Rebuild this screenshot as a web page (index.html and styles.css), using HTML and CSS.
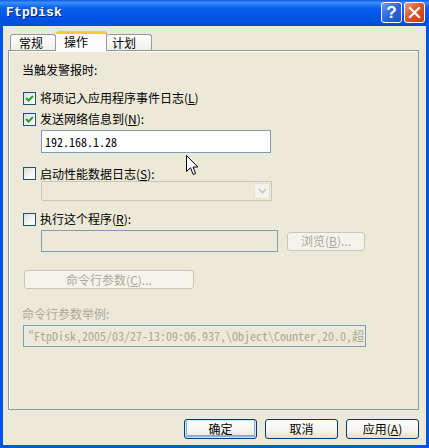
FILE: index.html
```html
<!DOCTYPE html>
<html lang="zh-CN">
<head>
  <meta charset="UTF-8">
  <title>FtpDisk</title>
  <link rel="stylesheet" href="styles.css">
</head>
<body>
  <div class="window">
    <div class="titlebar">
      <span class="title">FtpDisk</span>
      <div class="caption-buttons">
        <span class="cap-btn help">?</span>
        <span class="cap-btn close">
          <svg width="13" height="13" viewBox="0 0 13 13"><path d="M2 2 L11 11 M11 2 L2 11" stroke="#fff" stroke-width="2.2" stroke-linecap="square"/></svg>
        </span>
      </div>
    </div>

    <div class="client">
      <div class="tabs">
        <span class="tab">常规</span>
        <span class="tab selected">操作</span>
        <span class="tab">计划</span>
      </div>

      <div class="panel">
        <div class="label first">当触发警报时:</div>

        <div class="check row-log">
          <span class="box checked"><svg width="11" height="11" viewBox="0 0 11 11"><path d="M2 5 L4.5 7.5 L9 3" fill="none" stroke="#21a121" stroke-width="2"/></svg></span>
          将项记入应用程序事件日志(<u>L</u>)
        </div>
        <div class="check row-net">
          <span class="box checked"><svg width="11" height="11" viewBox="0 0 11 11"><path d="M2 5 L4.5 7.5 L9 3" fill="none" stroke="#21a121" stroke-width="2"/></svg></span>
          发送网络信息到(<u>N</u>):
        </div>
        <div class="field net-field">192.168.1.28</div>

        <div class="check row-perf">
          <span class="box"></span>
          启动性能数据日志(<u>S</u>):
        </div>
        <div class="combo">
          <span class="combo-arrow">
            <svg width="9" height="6" viewBox="0 0 9 6"><path d="M1 1 L4.5 4.5 L8 1" fill="none" stroke="#c9c7ba" stroke-width="1.6"/></svg>
          </span>
        </div>

        <div class="check row-run">
          <span class="box"></span>
          执行这个程序(<u>R</u>):
        </div>
        <div class="run-row">
          <div class="field disabled run-field"></div>
          <span class="btn disabled browse">浏览(<u>B</u>)...</span>
        </div>

        <span class="btn disabled cmd">命令行参数(<u>C</u>)...</span>

        <div class="label muted">命令行参数举例:</div>
        <div class="field disabled example">"FtpDisk,2005/03/27-13:09:06.937,\Object\Counter,20.0,超</div>
      </div>

      <div class="buttons">
        <span class="btn default">确定</span>
        <span class="btn">取消</span>
        <span class="btn">应用(<u>A</u>)</span>
      </div>
    </div>

    <svg class="pointer" width="13" height="21" viewBox="0 0 13 21">
      <path d="M0.5 0.5 L0.5 16.5 L4.5 12.8 L7.2 19.5 L9.6 18.5 L7 12 L11.8 12 Z" fill="#fff" stroke="#000" stroke-width="1"/>
    </svg>
  </div>
</body>
</html>
```

FILE: styles.css
```css
/* Page */
body {
  margin: 0;
  padding: 0;
  font-family: "Noto Sans CJK SC", "Liberation Sans", sans-serif;
  font-size: 12px;
  color: #000;
}

.window {
  position: relative;
  width: 429px;
  height: 448px;
  display: flex;
  flex-direction: column;
  background-color: #0055e5;
}

/* Title bar */
.titlebar {
  height: 26px;
  display: flex;
  align-items: flex-start;
  justify-content: space-between;
  padding: 0 4px 0 6px;
  background: linear-gradient(to bottom, #0a5ddc 0%, #3d8ef9 10%, #0b5ff0 30%, #0054e3 70%, #0050de 100%);
}

.title {
  margin-top: 5px;
  font-family: "Liberation Mono", monospace;
  font-weight: bold;
  font-size: 13px;
  color: #fff;
  text-shadow: 1px 1px 0 #0a1e80;
  letter-spacing: 0.2px;
}

.caption-buttons {
  display: flex;
  gap: 2px;
  margin-top: 2px;
}

.cap-btn {
  width: 21px;
  height: 21px;
  box-sizing: border-box;
  border: 1px solid #fff;
  border-radius: 3px;
  display: flex;
  align-items: center;
  justify-content: center;
}

.help {
  background: linear-gradient(135deg, #6a9cf7 0%, #2c66e0 50%, #1e4fd0 100%);
  color: #fff;
  font-family: "Liberation Sans", sans-serif;
  font-weight: bold;
  font-size: 17px;
}

.close {
  background: linear-gradient(135deg, #f09a7c 0%, #e2542c 45%, #c93a15 100%);
}

/* Client area */
.client {
  flex: 1;
  margin: 0 3px 3px 3px;
  padding: 6px 7px 0 5px;
  background-color: #ece9d8;
  display: flex;
  flex-direction: column;
}

.tabs {
  height: 18px;
  display: flex;
  align-items: flex-end;
  padding-left: 2px;
  position: relative;
  z-index: 1;
}

.tab {
  height: 16px;
  box-sizing: border-box;
  padding: 0 0 0 8px;
  border: 1px solid #919b9c;
  border-bottom: none;
  border-radius: 3px 3px 0 0;
  background: linear-gradient(to bottom, #fefefe, #f1efe6);
  line-height: 15px;
}

.tab:first-child {
  width: 46px;
}

.tab:last-child {
  width: 45px;
  border-left: none;
  padding-left: 5px;
}

.tab.selected {
  width: 51px;
  height: 20px;
  margin-bottom: -1px;
  border-top: 3px solid #ffc83c;
  border-left: none;
  background: #fcfcfe;
  line-height: 15px;
  padding-left: 8px;
}

.panel {
  height: 360px;
  box-sizing: border-box;
  border: 1px solid #919b9c;
  box-shadow: inset 1px 1px 0 #fcfcfe;
  padding: 11px 0 0 13px;
  display: flex;
  flex-direction: column;
  align-items: flex-start;
}

.label {
  height: 16px;
  line-height: 16px;
}

.label.muted {
  margin-top: 17px;
  color: #aca899;
}

.check {
  display: flex;
  align-items: center;
  height: 16px;
  line-height: 16px;
}

.row-log { margin-top: 12px; }
.row-net { margin-top: 5px; }
.row-perf { margin-top: 13px; height: 15px; }
.row-run { margin-top: 10px; }

.box {
  width: 13px;
  height: 13px;
  box-sizing: border-box;
  margin: 0 4px 0 1px;
  border: 1px solid #1c5180;
  background: linear-gradient(135deg, #dcdcd7 0%, #f6f6f4 60%, #fff 100%);
  display: flex;
  align-items: center;
  justify-content: center;
}

u {
  text-decoration: underline;
  text-underline-offset: 1px;
}

/* Inputs */
.field {
  box-sizing: border-box;
  border: 1px solid #7f9db9;
  background-color: #fff;
  padding: 0 3px;
  font-family: "Noto Sans Mono CJK SC", "Liberation Mono", monospace;
  font-size: 12px;
  line-height: 20px;
  white-space: nowrap;
  overflow: hidden;
}

.field.disabled {
  background-color: #ece9d8;
  color: #aca899;
}

.net-field {
  margin: 3px 0 0 19px;
  width: 230px;
  height: 23px;
  line-height: 21px;
}

.combo {
  margin: 0 0 0 19px;
  width: 231px;
  height: 20px;
  box-sizing: border-box;
  border: 1px solid #c9c7ba;
  display: flex;
  justify-content: flex-end;
  padding: 1px;
}

.combo-arrow {
  width: 16px;
  box-sizing: border-box;
  border: 1px solid #e5e3d8;
  background-color: #f4f3ee;
  display: flex;
  align-items: center;
  justify-content: center;
}

.run-row {
  margin: 3px 0 0 19px;
  display: flex;
  align-items: center;
  gap: 9px;
}

.run-field {
  width: 237px;
  height: 22px;
}

.example {
  margin-top: 3px;
  margin-left: 1px;
  width: 343px;
  height: 22px;
  padding-left: 4px;
}

/* Buttons */
.btn {
  box-sizing: border-box;
  height: 20px;
  border: 1px solid #003c74;
  border-radius: 3px;
  background: linear-gradient(to bottom, #fff 0%, #f4f3ee 60%, #e3e0d3 100%);
  display: flex;
  align-items: center;
  justify-content: center;
  line-height: 16px;
}

.btn.disabled {
  border-color: #c9c7ba;
  background: #f5f4ea;
  color: #aca899;
}

.browse {
  width: 78px;
  height: 19px;
}

.cmd {
  margin: 18px 0 0 2px;
  width: 170px;
  height: 19px;
}

.buttons {
  margin-top: 9px;
  display: flex;
  justify-content: flex-end;
  gap: 8px;
}

.buttons .btn {
  width: 73px;
}

.btn.default {
  box-shadow: inset 0 0 0 1px #cee7ff, inset 0 -1px 0 2px #89ade4;
}

/* Mouse pointer over the dialog */
.pointer {
  position: absolute;
  left: 186px;
  top: 155px;
}
```
